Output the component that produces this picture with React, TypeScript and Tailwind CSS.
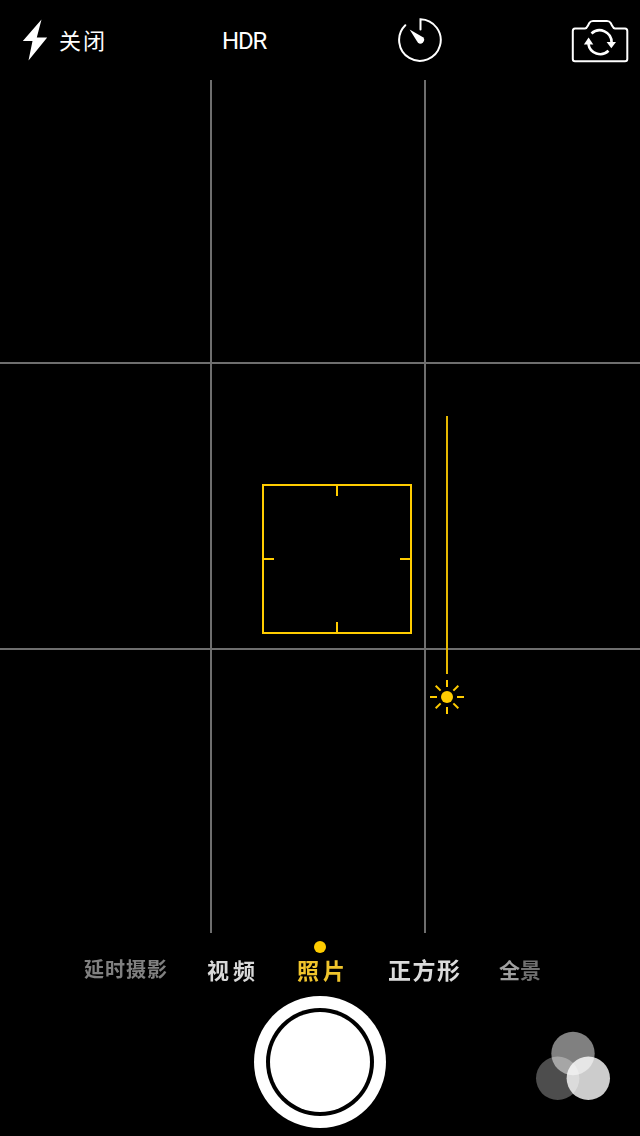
const cjk = { fontFamily: '"Noto Sans CJK SC", "Noto Sans", sans-serif' };

function Flash() {
  return (
    <svg width="26" height="42" viewBox="20 19 26 42" className="shrink-0">
      <path d="M40.5 19.5 L21.8 41 L31.5 41 L27.5 60.5 L46.3 37.5 L35.8 37.5 Z" fill="#fff" />
    </svg>
  );
}

function Timer() {
  return (
    <svg width="46" height="46" viewBox="397 17 46 46" fill="none">
      <path d="M420.5 29.5 V19.2 A20.8 20.8 0 1 1 405.3 25.2" stroke="#fff" strokeWidth="2" strokeLinecap="round" />
      <path d="M409.6 29.4 L423 37.3 A3.6 3.6 0 0 1 417.8 42.4 Z" fill="#fff" />
    </svg>
  );
}

function CameraFlip() {
  return (
    <svg width="58" height="44" viewBox="571 19 58 44" fill="none">
      <path
        d="M575 28.5 H585 C586.5 28.5 587 27.5 588 25.5 L589.3 23 C590.2 21.4 591 21 593 21 H607 C609 21 609.8 21.4 610.7 23 L612 25.5 C613 27.5 613.5 28.5 615 28.5 H625 C626.5 28.5 627.3 29.3 627.3 31 V59 C627.3 60.7 626.5 61.3 625 61.3 H575 C573.5 61.3 572.8 60.7 572.8 59 V31 C572.8 29.3 573.5 28.5 575 28.5 Z"
        stroke="#fff"
        strokeWidth="2"
      />
      <path d="M591.5 33.5 A12 12 0 0 1 611.6 42.5" stroke="#fff" strokeWidth="2.6" />
      <path d="M608.5 50.8 A12 12 0 0 1 588.4 44" stroke="#fff" strokeWidth="2.6" />
      <path d="M606.6 42 H616 L611.3 48.2 Z" fill="#fff" />
      <path d="M583.9 44.4 H593.3 L588.6 37.6 Z" fill="#fff" />
    </svg>
  );
}

function Sun() {
  const rays = [0, 45, 90, 135, 180, 225, 270, 315];
  return (
    <svg width="36" height="36" viewBox="-18 -18 36 36">
      <circle r="6" fill="#ffcc00" />
      {rays.map((a) => (
        <rect key={a} x="-1" y={a % 90 === 0 ? -17 : -16} width="2" height="7" fill="#ffcc00" transform={`rotate(${a})`} />
      ))}
    </svg>
  );
}

function Filters() {
  return (
    <svg width="76" height="70" viewBox="535 1031 76 70">
      <circle cx="573" cy="1053.5" r="21.7" fill="#fff" fillOpacity="0.5" />
      <circle cx="557.7" cy="1078.3" r="21.7" fill="#fff" fillOpacity="0.3" />
      <circle cx="588.3" cy="1078.3" r="21.7" fill="#fff" fillOpacity="0.8" />
    </svg>
  );
}

export default function App() {
  return (
    <div className="w-[640px] h-[1136px] bg-black flex flex-col overflow-hidden text-white">
      <div className="h-[80px] shrink-0 relative flex items-center">
        <div className="w-[222px] pl-[21px] flex items-center gap-[12px] shrink-0">
          <Flash />
          <span className="text-[22px] tracking-[2px] leading-none text-white mb-[2px]" style={cjk}>关闭</span>
        </div>
        <span className="text-[24px] leading-none w-[175px] shrink-0 tracking-[-1.2px] text-white mt-[2px]" style={{ fontFamily: 'Roboto, sans-serif' }}>HDR</span>
        <div><Timer /></div>
        <div className="ml-auto mr-[11px] mt-[1px]"><CameraFlip /></div>
      </div>

      <div className="h-[853px] shrink-0 relative">
        <div className="absolute left-[210px] top-0 bottom-0 w-[2px] bg-[#6e6e6e]" />
        <div className="absolute left-[424px] top-0 bottom-0 w-[2px] bg-[#6e6e6e]" />
        <div className="absolute left-0 right-0 top-[282px] h-[2px] bg-[#6e6e6e]" />
        <div className="absolute left-0 right-0 top-[568px] h-[2px] bg-[#6e6e6e]" />

        <div className="absolute left-[262px] top-[404px] w-[150px] h-[150px] border-2 border-[#ffcc00]">
          <div className="absolute left-[72px] top-0 w-[2px] h-[10px] bg-[#ffcc00]" />
          <div className="absolute left-[72px] bottom-0 w-[2px] h-[10px] bg-[#ffcc00]" />
          <div className="absolute top-[72px] left-0 h-[2px] w-[10px] bg-[#ffcc00]" />
          <div className="absolute top-[72px] right-0 h-[2px] w-[10px] bg-[#ffcc00]" />
        </div>

        <div className="absolute left-[446px] top-[336px] w-[2px] h-[258px] bg-[#e6b800]" />
        <div className="absolute left-[429px] top-[599px]"><Sun /></div>
      </div>

      <div className="flex-1 relative">
        <div className="absolute left-[314px] top-[8px] w-[12px] h-[12px] rounded-full bg-[#ffcc00]" />
        <div className="pt-[9px] h-[63px] flex items-center pl-[84px] font-bold leading-none blur-[0.5px]" style={cjk}>
          <span className="w-[123px] text-[20px] tracking-[1px] text-[#808080] shrink-0">延时摄影</span>
          <span className="w-[90px] text-[22px] tracking-[4px] text-[#d8d8d8] shrink-0">视频</span>
          <span className="w-[91px] text-[22px] tracking-[4px] text-[#f0c52c] shrink-0">照片</span>
          <span className="w-[111px] text-[23px] tracking-[1.5px] text-[#dcdcdc] shrink-0">正方形</span>
          <span className="text-[21px] shrink-0"><span className="text-[#a0a0a0]">全</span><span className="text-[#707070]">景</span></span>
        </div>
        <div className="relative h-[140px]">
          <div className="absolute left-[254px] top-0 w-[132px] h-[132px] rounded-full bg-white flex items-center justify-center">
            <div className="w-[108px] h-[108px] rounded-full bg-black flex items-center justify-center">
              <div className="w-[100px] h-[100px] rounded-full bg-white" />
            </div>
          </div>
          <div className="absolute left-[535px] top-[35px]"><Filters /></div>
        </div>
      </div>
    </div>
  );
}
